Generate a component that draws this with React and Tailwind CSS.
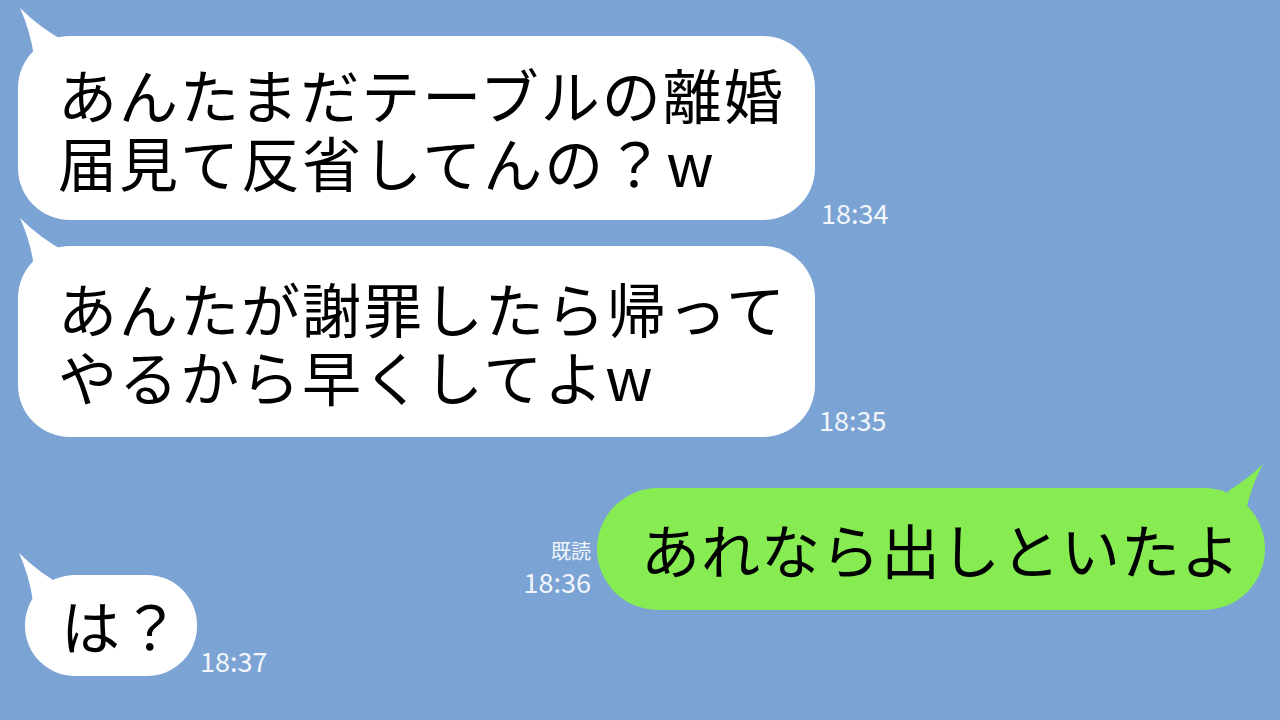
const jp = "font-['Noto_Sans_CJK_JP','Noto_Sans',sans-serif]";

function TailLeft({ className }) {
  return (
    <svg className={`absolute ${className}`} width="60" height="64" viewBox="0 0 60 64">
      <path d="M2 2 Q 12 24 16 50 L 48 36 Q 22 22 2 2 Z" fill="#ffffff" />
    </svg>
  );
}

function Time({ children, className = '' }) {
  return (
    <span className={`text-[27px] leading-none text-[#f2f6fb] ${className}`}>{children}</span>
  );
}

export default function App() {
  return (
    <div className={`w-[1280px] h-[720px] bg-[#7ba4d5] overflow-hidden text-black ${jp}`}>
      {/* 1 */}
      <div className="flex items-end pt-[36px] pl-[18px]">
        <div className="relative w-[797px] h-[184px] rounded-[52px] bg-white pl-[40px] flex flex-col justify-center text-[59px] leading-[68px] tracking-[2px]">
          <TailLeft className="left-[0px] top-[-30px]" />
          <span className="relative">あんたまだテーブルの離婚</span>
          <span className="relative">届見て反省してんの？w</span>
        </div>
        <Time className="ml-[6px] mb-[-6px]">18:34</Time>
      </div>

      {/* 2 */}
      <div className="flex items-end pt-[26px] pl-[18px]">
        <div className="relative w-[797px] h-[191px] rounded-[52px] bg-white pl-[40px] flex flex-col justify-center text-[59px] leading-[68px] tracking-[2px]">
          <TailLeft className="left-[0px] top-[-30px]" />
          <span className="relative">あんたが謝罪したら帰って</span>
          <span className="relative">やるから早くしてよw</span>
        </div>
        <Time className="ml-[4px] mb-[4px]">18:35</Time>
      </div>

      {/* 3 */}
      <div className="flex items-end justify-end pt-[51px] pr-[15px]">
        <div className="flex flex-col items-end mr-[6px] mb-[15px] text-[#f2f6fb]">
          <span className="text-[20px] leading-none mb-[7px]">既読</span>
          <Time>18:36</Time>
        </div>
        <div className="relative w-[668px] h-[122px] rounded-[61px] bg-[#86ec52] pl-[44px] flex items-center text-[59px] tracking-[1px]">
          <svg className="absolute right-[0px] top-[-26px]" width="46" height="50" viewBox="0 0 46 50">
            <path d="M44 2 Q 30 16 8 30 L 28 44 Q 34 20 44 2 Z" fill="#86ec52" />
          </svg>
          <span className="relative">あれなら出しといたよ</span>
        </div>
      </div>

      {/* 4 */}
      <div className="flex items-end -mt-[35px] pl-[25px]">
        <div className="relative w-[172px] h-[101px] rounded-[50px] bg-white pl-[36px] flex items-center text-[59px] tracking-[1px]">
          <TailLeft className="left-[-8px] top-[-24px]" />
          <span className="relative">は？</span>
        </div>
        <Time className="ml-[3px] mb-[2px]">18:37</Time>
      </div>
    </div>
  );
}
